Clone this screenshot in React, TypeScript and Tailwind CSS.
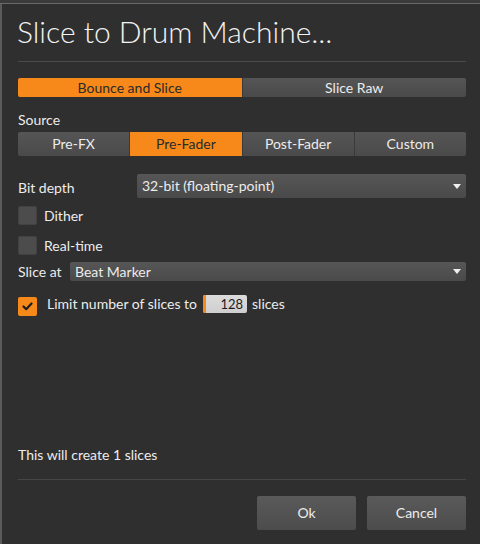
import React from "react";

const font = { fontFamily: '"Lato", "Open Sans", sans-serif' };

function Arrow() {
  return (
    <svg width="8" height="5" viewBox="0 0 8 5" className="shrink-0">
      <polygon points="0,0 8,0 4,5" fill="#f0f0f0" />
    </svg>
  );
}

function Check({ checked }: { checked?: boolean }) {
  if (checked)
    return (
      <div className="w-[19px] h-[19px] rounded-[2px] bg-[#f7891b] flex items-center justify-center shrink-0">
        <svg width="11" height="9" viewBox="0 0 11 9">
          <polyline points="1.5,4.5 4.2,7.2 9.5,1.5" fill="none" stroke="#1e1e1e" strokeWidth="2.2" strokeLinecap="round" strokeLinejoin="round" />
        </svg>
      </div>
    );
  return <div className="w-[19px] h-[19px] rounded-[2px] bg-[#4c4c4c] border border-[#424242] shrink-0" />;
}

export default function App() {
  return (
    <div className="w-[480px] h-[544px] bg-[#2f2f2f] flex flex-col overflow-hidden text-[#ececec]" style={font}>
      <div className="h-[3px] bg-[#3b3b3b] shrink-0" />
      <div className="h-[1px] bg-[#6a6a6a] shrink-0" />
      <div className="flex-1 flex border-l-2 border-[#5a5a5a]">
        <div className="flex-1 flex flex-col pl-[16px] pr-[14px]">
          <div className="h-[57px] flex items-center shrink-0">
            <div className="text-[30px] font-light leading-none text-[#f4f4f4] -ml-[1px] pb-[3px]">Slice to Drum Machine...</div>
          </div>
          <div className="h-[1px] bg-[#4a4a4a] shrink-0" />
          <div className="mt-[16px] h-[19px] flex rounded-[2px] overflow-hidden text-[14px] shrink-0">
            <div className="flex-1 bg-[#f7891b] text-[#2a2a2a] flex items-center justify-center">Bounce and Slice</div>
            <div className="w-[1px] bg-[#3a3a3a]" />
            <div className="flex-1 bg-gradient-to-b from-[#555555] to-[#4a4a4a] flex items-center justify-center">Slice Raw</div>
          </div>
          <div className="mt-[12px] h-[20px] flex items-center text-[14px] shrink-0">Source</div>
          <div className="mt-[3px] h-[24px] flex rounded-[2px] overflow-hidden text-[14px] shrink-0">
            <div className="flex-1 bg-gradient-to-b from-[#555555] to-[#4a4a4a] flex items-center justify-center pb-[1px]">Pre-FX</div>
            <div className="w-[1px] bg-[#3a3a3a]" />
            <div className="flex-1 bg-[#f7891b] text-[#2a2a2a] flex items-center justify-center pb-[1px]">Pre-Fader</div>
            <div className="w-[1px] bg-[#3a3a3a]" />
            <div className="flex-1 bg-gradient-to-b from-[#555555] to-[#4a4a4a] flex items-center justify-center pb-[1px]">Post-Fader</div>
            <div className="w-[1px] bg-[#3a3a3a]" />
            <div className="flex-1 bg-gradient-to-b from-[#555555] to-[#4a4a4a] flex items-center justify-center pb-[1px]">Custom</div>
          </div>
          <div className="mt-[18px] h-[24px] flex items-center text-[14px] shrink-0">
            <div className="w-[119px] pt-[2px]">Bit depth</div>
            <div className="flex-1 h-full rounded-[2px] bg-gradient-to-b from-[#565656] to-[#4a4a4a] flex items-center pl-[5px] pr-[5px]">
              <div className="flex-1 pb-[1px]">32-bit (floating-point)</div>
              <Arrow />
            </div>
          </div>
          <div className="mt-[8px] h-[19px] flex items-center gap-[7px] text-[14px] shrink-0">
            <Check />
            <div>Dither</div>
          </div>
          <div className="mt-[11px] h-[19px] flex items-center gap-[7px] text-[14px] shrink-0">
            <Check />
            <div>Real-time</div>
          </div>
          <div className="mt-[7px] h-[19px] flex items-center text-[14px] shrink-0">
            <div className="w-[52px] pb-[1px]">Slice at</div>
            <div className="flex-1 h-full rounded-[2px] bg-gradient-to-b from-[#565656] to-[#4a4a4a] flex items-center pl-[5px] pr-[5px]">
              <div className="flex-1 pb-[1px]">Beat Marker</div>
              <Arrow />
            </div>
          </div>
          <div className="mt-[14px] h-[21px] flex text-[14px] shrink-0">
            <div className="self-end"><Check checked /></div>
            <div className="ml-[10px] self-center pb-[4px]">Limit number of slices to</div>
            <div className="ml-[6px] self-start w-[44px] h-[18px] rounded-[2px] bg-gradient-to-b from-[#dcdcdc] to-[#cfcfcf] flex overflow-hidden">
              <div className="w-[3px] bg-[#f7891b]" />
              <div className="flex-1 text-right pr-[4px] text-[#1c1c1c] text-[13px] leading-[18px]">128</div>
            </div>
            <div className="ml-[5px] self-center pb-[4px]">slices</div>
          </div>
          <div className="flex-1" />
          <div className="h-[18px] flex items-center text-[14px] shrink-0 pb-[1px]">This will create 1 slices</div>
          <div className="mt-[15px] h-[1px] bg-[#464646] shrink-0" />
          <div className="mt-[16px] h-[34px] flex justify-end gap-[11px] text-[14px] shrink-0">
            <div className="w-[99px] rounded-[2px] bg-gradient-to-b from-[#5a5a5a] to-[#4c4c4c] flex items-center justify-center pb-[1px]">Ok</div>
            <div className="w-[99px] rounded-[2px] bg-gradient-to-b from-[#5a5a5a] to-[#4c4c4c] flex items-center justify-center pb-[1px]">Cancel</div>
          </div>
          <div className="h-[14px] shrink-0" />
        </div>
      </div>
    </div>
  );
}
